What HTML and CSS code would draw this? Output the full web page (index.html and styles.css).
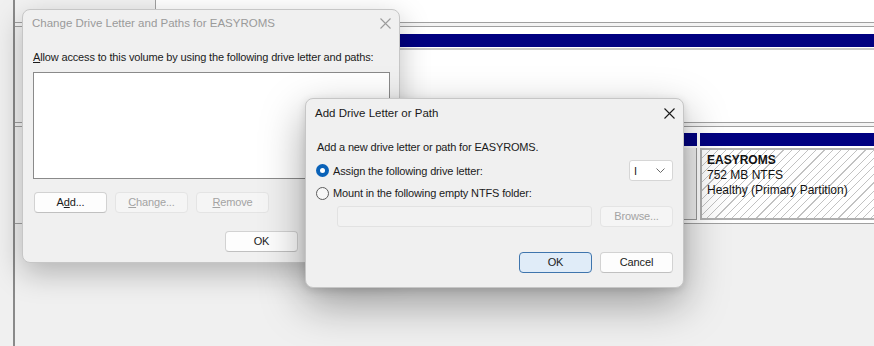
FILE: index.html
```html
<!DOCTYPE html>
<html>
<head>
<meta charset="utf-8">
<link rel="stylesheet" href="styles.css">
</head>
<body>
<div class="app">
  <div class="edge"></div>
  <div class="view">
    <div class="disk disk-top">
      <div class="label"></div>
      <div class="parts"><div class="part plain"></div></div>
    </div>
    <div class="gap"></div>
    <div class="disk disk-b">
      <div class="label"></div>
      <div class="parts">
        <div class="part">
          <div class="navy"></div>
          <div class="body white"></div>
        </div>
      </div>
    </div>
    <div class="gap"></div>
    <div class="disk disk-c">
      <div class="label"></div>
      <div class="parts">
        <div class="part prev">
          <div class="navy"></div>
          <div class="body grey"></div>
        </div>
        <div class="part easy">
          <div class="navy"></div>
          <div class="body hatch">
            <div class="vname">EASYROMS</div>
            <div>752 MB NTFS</div>
            <div>Healthy (Primary Partition)</div>
          </div>
        </div>
      </div>
    </div>
  </div>
</div>

<div class="dlg dlg1">
  <div class="titlebar">
    <span class="title inactive">Change Drive Letter and Paths for EASYROMS</span>
    <svg class="close" width="11" height="11" viewBox="0 0 11 11"><path d="M0.5 0.5 L10.5 10.5 M10.5 0.5 L0.5 10.5" stroke="#9c9c9c" stroke-width="1.1" fill="none"/></svg>
  </div>
  <div class="content c1">
    <div class="txt"><u>A</u>llow access to this volume by using the following drive letter and paths:</div>
    <div class="listbox"></div>
    <div class="btnrow">
      <div class="btn">A<u>d</u>d...</div>
      <div class="btn disabled"><u>C</u>hange...</div>
      <div class="btn disabled"><u>R</u>emove</div>
    </div>
    <div class="btnrow okrow">
      <div class="btn">OK</div>
      <div class="btn">Cancel</div>
    </div>
  </div>
</div>

<div class="dlg dlg2">
  <div class="titlebar t2">
    <span class="title">Add Drive Letter or Path</span>
    <svg class="close" width="11" height="11" viewBox="0 0 11 11"><path d="M0.5 0.5 L10.5 10.5 M10.5 0.5 L0.5 10.5" stroke="#1a1a1a" stroke-width="1.1" fill="none"/></svg>
  </div>
  <div class="content c2">
    <div class="txt intro">Add a new drive letter or path for EASYROMS.</div>
    <div class="radiorow r1">
      <span class="radio on"></span>
      <span class="txt">Assign the following drive letter:</span>
      <div class="combo"><span class="txt">I</span><svg width="9" height="5" viewBox="0 0 9 5"><path d="M0.5 0.5 L4.5 4.5 L8.5 0.5" stroke="#6a6a6a" stroke-width="1" fill="none"/></svg></div>
    </div>
    <div class="radiorow r2">
      <span class="radio"></span>
      <span class="txt">Mount in the following empty NTFS folder:</span>
    </div>
    <div class="folderrow">
      <div class="textbox"></div>
      <div class="btn disabled">Browse...</div>
    </div>
    <div class="btnrow endrow">
      <div class="btn default">OK</div>
      <div class="btn">Cancel</div>
    </div>
  </div>
</div>
</body>
</html>
```

FILE: styles.css
```css
html, body {
  margin: 0;
  padding: 0;
}
body {
  width: 874px;
  height: 346px;
  overflow: hidden;
  position: relative;
  background: #f0f0f0;
  font-family: "Liberation Sans", Arial, sans-serif;
  color: #1b1b1b;
}
.app {
  display: flex;
  height: 346px;
}
.edge {
  width: 13px;
  background: #f0f0f0;
  border-right: 2px solid #8a8a8a;
}
.view {
  flex: 1;
  display: flex;
  flex-direction: column;
  background: #f0f0f0;
}
.disk {
  display: flex;
  box-sizing: border-box;
  border-color: #a0a0a0;
  border-style: solid;
  border-width: 0;
}
.label {
  width: 140px;
  background: #f2f2f2;
  border-right: 1px solid #a0a0a0;
}
.parts {
  flex: 1;
  display: flex;
  background: #fff;
}
.disk-top {
  height: 23px;
  border-bottom-width: 1px;
}
.gap {
  height: 3px;
  background: #f4f4f4;
}
.disk-b {
  height: 97px;
  border-top-width: 1px;
  border-bottom-width: 1px;
}
.disk-c {
  height: 98px;
  border-top-width: 1px;
  border-bottom-width: 1px;
}
.part {
  display: flex;
  flex-direction: column;
  flex: 1;
}
.part.plain {
  background: #fff;
}
.disk-b .part {
  padding-top: 7px;
}
.disk-c .part {
  padding-top: 6px;
}
.navy {
  height: 13px;
  background: #000080;
}
.disk-b .body.white {
  flex: 1;
  border-top: 2px solid #c8c8c8;
  margin-top: 1px;
  background: #fff;
}
.part.prev .body.grey {
  flex: 1;
  margin: 2px 0 3px 0;
  background: #f0f0f0;
  border-right: 1px solid #9a9a9a;
  border-bottom: 1px solid #9a9a9a;
}
.part.easy {
  flex: 0 0 174px;
  margin-left: 3px;
}
.body.hatch {
  flex: 1;
  margin: 2px 0 3px 0;
  border: 2px solid #b0b0b0;
  border-right: none;
  padding: 3px 5px;
  font-size: 12px;
  line-height: 15px;
  color: #111;
  background-color: #fff;
  background-image: repeating-linear-gradient(135deg, #ffffff 0px, #ffffff 5px, #c2c2c2 5px, #c2c2c2 5.8px);
}
.vname {
  font-weight: bold;
}

/* dialogs */
.dlg {
  position: absolute;
  box-sizing: border-box;
  background: #f0f0f0;
  border: 1px solid #c6c6c6;
  border-radius: 8px;
  display: flex;
  flex-direction: column;
}
.dlg1 {
  left: 22px;
  top: 9px;
  width: 378px;
  height: 254px;
  box-shadow: 0 10px 30px rgba(0, 0, 0, 0.26);
}
.dlg2 {
  left: 305px;
  top: 98px;
  width: 379px;
  height: 190px;
  box-shadow: 0 16px 44px rgba(0, 0, 0, 0.36), 0 2px 8px rgba(0, 0, 0, 0.12);
}
.titlebar {
  height: 26px;
  display: flex;
  align-items: center;
  justify-content: space-between;
  padding: 0 8px 0 9px;
}
.titlebar.t2 {
  height: 28px;
  padding: 0 8px 0 9px;
}
.title {
  font-size: 11.5px;
  color: #1a1a1a;
}
.title.inactive {
  color: #9a9a9a;
}
.close {
  display: block;
}
.txt {
  font-size: 11px;
  letter-spacing: -0.15px;
  line-height: 14px;
}
.content {
  display: flex;
  flex-direction: column;
}
.c1 {
  padding: 14px 0 0 10px;
}
.listbox {
  margin-top: 8px;
  width: 357px;
  height: 107px;
  box-sizing: border-box;
  background: #fff;
  border: 1px solid #8a8a8a;
}
.btnrow {
  display: flex;
  gap: 8px;
}
.c1 .btnrow {
  margin-top: 13px;
  margin-left: 1px;
}
.c1 .okrow {
  margin-top: 18px;
  margin-left: 192px;
}
.btn {
  box-sizing: border-box;
  width: 73px;
  height: 21px;
  background: #fdfdfd;
  border: 1px solid #d2d2d2;
  border-bottom-color: #c0c0c0;
  border-radius: 4px;
  font-size: 11px;
  letter-spacing: -0.15px;
  line-height: 19px;
  text-align: center;
  color: #1b1b1b;
}
.btn.disabled {
  background: #f5f5f5;
  border-color: #e4e4e4;
  color: #a3a3a3;
}
.btn.default {
  background: #e0ecf8;
  border-color: #3f75ad;
}
.c2 {
  padding: 13px 10px 0 10px;
}
.intro {
  margin-left: 1px;
}
.radiorow {
  display: flex;
  align-items: center;
}
.radiorow .txt {
  margin-left: 4px;
}
.r1 {
  margin-top: 6px;
  height: 21px;
}
.r2 {
  margin-top: 5px;
  height: 14px;
}
.radio {
  box-sizing: border-box;
  width: 13px;
  height: 13px;
  border-radius: 50%;
  border: 1px solid #5c5c5c;
  background: #f7f7f7;
  display: flex;
  align-items: center;
  justify-content: center;
}
.radio.on {
  border: none;
  background: #0a62b8;
}
.radio.on::after {
  content: "";
  width: 5px;
  height: 5px;
  border-radius: 50%;
  background: #fff;
}
.combo {
  margin-left: auto;
  box-sizing: border-box;
  width: 44px;
  height: 21px;
  background: #fff;
  border: 1px solid #d6d6d6;
  border-radius: 3px;
  display: flex;
  align-items: center;
  justify-content: space-between;
  padding: 0 7px 0 4px;
}
.combo .txt {
  margin: 0;
}
.folderrow {
  display: flex;
  gap: 8px;
  margin-top: 6px;
  padding-left: 21px;
}
.textbox {
  box-sizing: border-box;
  width: 255px;
  height: 21px;
  background: #f2f2f2;
  border: 1px solid #e2e2e2;
  border-radius: 3px;
}
.endrow {
  margin-top: 25px;
  justify-content: flex-end;
}
```
